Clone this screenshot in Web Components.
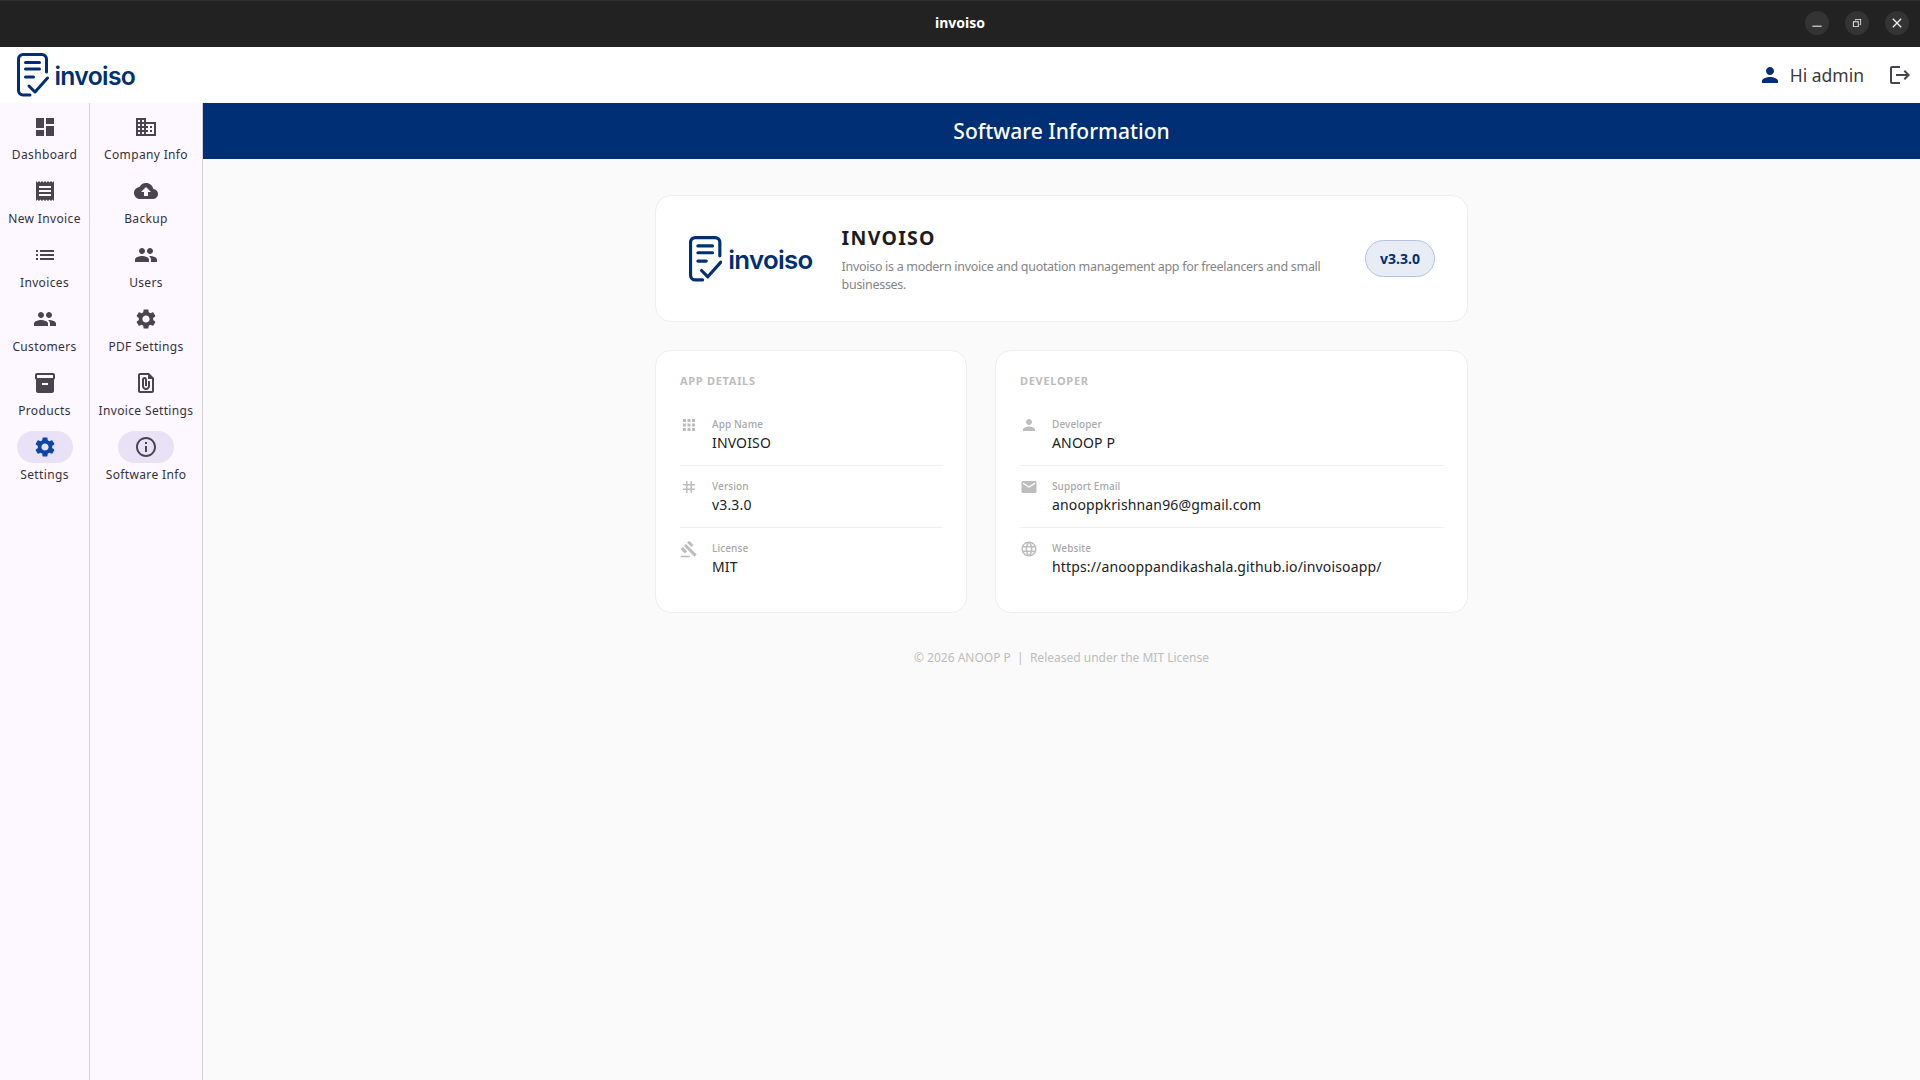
<!DOCTYPE html>
<html lang="en">
<head>
<meta charset="utf-8">
<title>invoiso</title>
<style>
  html, body { margin: 0; height: 100%; }
  body { font-family: "Noto Sans", "Open Sans", sans-serif; background: #fafafa; overflow: hidden; }
</style>
</head>
<body>
<invoiso-app></invoiso-app>

<script>
const ICONS = {
  dashboard: 'M3 13h8V3H3v10zm0 8h8v-6H3v6zm10 0h8V11h-8v10zm0-18v6h8V3h-8z',
  receipt: 'M18 17H6v-2h12v2zm0-4H6v-2h12v2zm0-4H6V7h12v2zM3 22l1.5-1.5L6 22l1.5-1.5L9 22l1.5-1.5L12 22l1.5-1.5L15 22l1.5-1.5L18 22l1.5-1.5L21 22V2l-1.5 1.5L18 2l-1.5 1.5L15 2l-1.5 1.5L12 2l-1.5 1.5L9 2 7.5 3.5 6 2 4.5 3.5 3 2v20z',
  list: 'M3 13h2v-2H3v2zm0 4h2v-2H3v2zm0-8h2V7H3v2zm4 4h14v-2H7v2zm0 4h14v-2H7v2zM7 7v2h14V7H7z',
  people: 'M16 11c1.66 0 2.99-1.34 2.99-3S17.66 5 16 5c-1.66 0-3 1.34-3 3s1.34 3 3 3zm-8 0c1.66 0 2.99-1.34 2.99-3S9.66 5 8 5C6.34 5 5 6.34 5 8s1.34 3 3 3zm0 2c-2.33 0-7 1.17-7 3.5V19h14v-2.5c0-2.33-4.67-3.5-7-3.5zm8 0c-.29 0-.62.02-.97.05 1.16.84 1.97 1.97 1.97 3.45V19h6v-2.5c0-2.33-4.67-3.5-7-3.5z',
  inventory: 'M20 2H4c-1 0-2 .9-2 2v3.01c0 .72.43 1.34 1 1.69V20c0 1.1 1.1 2 2 2h14c.9 0 2-.9 2-2V8.7c.57-.35 1-.97 1-1.69V4c0-1.1-1-2-2-2zm-5 12H9v-2h6v2zm5-7H4V4h16v3z',
  settings: 'M19.14 12.94c.04-.3.06-.61.06-.94 0-.32-.02-.64-.07-.94l2.03-1.58c.18-.14.23-.41.12-.61l-1.92-3.32c-.12-.22-.37-.29-.59-.22l-2.39.96c-.5-.38-1.03-.7-1.62-.94l-.36-2.54c-.04-.24-.24-.41-.48-.41h-3.84c-.24 0-.43.17-.47.41l-.36 2.54c-.59.24-1.13.57-1.62.94l-2.39-.96c-.22-.08-.47 0-.59.22L2.74 8.87c-.12.21-.08.47.12.61l2.03 1.58c-.05.3-.09.63-.09.94s.02.64.07.94l-2.03 1.58c-.18.14-.23.41-.12.61l1.92 3.32c.12.22.37.29.59.22l2.39-.96c.5.38 1.03.7 1.62.94l.36 2.54c.05.24.24.41.48.41h3.84c.24 0 .44-.17.47-.41l.36-2.54c.59-.24 1.13-.56 1.62-.94l2.39.96c.22.08.47 0 .59-.22l1.92-3.32c.12-.22.07-.47-.12-.61l-2.01-1.58zM12 15.6c-1.98 0-3.6-1.62-3.6-3.6s1.62-3.6 3.6-3.6 3.6 1.62 3.6 3.6-1.62 3.6-3.6 3.6z',
  domain: 'M12 7V3H2v18h20V7H12zM6 19H4v-2h2v2zm0-4H4v-2h2v2zm0-4H4V9h2v2zm0-4H4V5h2v2zm4 12H8v-2h2v2zm0-4H8v-2h2v2zm0-4H8V9h2v2zm0-4H8V5h2v2zm10 12h-8v-2h2v-2h-2v-2h2v-2h-2V9h8v10zm-2-8h-2v2h2v-2zm0 4h-2v2h2v-2z',
  cloud: 'M19.35 10.04C18.67 6.59 15.64 4 12 4 9.11 4 6.6 5.64 5.35 8.04 2.34 8.36 0 10.91 0 14c0 3.31 2.69 6 6 6h13c2.76 0 5-2.24 5-5 0-2.64-2.05-4.78-4.65-4.96zM14 13v4h-4v-4H7l5-5 5 5h-3z',
  file: 'M15 2H6c-1.1 0-2 .9-2 2v16c0 1.1.9 2 2 2h12c1.1 0 2-.9 2-2V7l-5-5zM6 20V4h8v4h4v12H6zm10-10v5c0 2.21-1.79 4-4 4s-4-1.79-4-4V8.5c0-1.47 1.26-2.64 2.76-2.49 1.3.13 2.24 1.32 2.24 2.63V15h-2V8.5c0-.28-.22-.5-.5-.5s-.5.22-.5.5V15c0 1.1.9 2 2 2s2-.9 2-2v-5h2z',
  info: 'M11 7h2v2h-2zm0 4h2v6h-2zm1-9C6.48 2 2 6.48 2 12s4.48 10 10 10 10-4.48 10-10S17.52 2 12 2zm0 18c-4.41 0-8-3.59-8-8s3.59-8 8-8 8 3.59 8 8-3.59 8-8 8z',
  apps: 'M4 8h4V4H4v4zm6 12h4v-4h-4v4zm-6 0h4v-4H4v4zm0-6h4v-4H4v4zm6 0h4v-4h-4v4zm6-10v4h4V4h-4zm-6 4h4V4h-4v4zm6 6h4v-4h-4v4zm0 6h4v-4h-4v4z',
  tag: 'M20 10V8h-4V4h-2v4h-4V4H8v4H4v2h4v4H4v2h4v4h2v-4h4v4h2v-4h4v-2h-4v-4h4zm-6 4h-4v-4h4v4z',
  gavel: 'M1 21h12v2H1zM5.245 8.07l2.83-2.827 14.14 14.142-2.828 2.828zM12.317 1l5.657 5.656-2.83 2.83-5.654-5.66zM3.825 9.485l5.657 5.657-2.828 2.828-5.657-5.657z',
  person: 'M12 12c2.21 0 4-1.79 4-4s-1.79-4-4-4-4 1.79-4 4 1.79 4 4 4zm0 2c-2.67 0-8 1.34-8 4v2h16v-2c0-2.66-5.33-4-8-4z',
  email: 'M20 4H4c-1.1 0-1.99.9-1.99 2L2 18c0 1.1.9 2 2 2h16c1.1 0 2-.9 2-2V6c0-1.1-.9-2-2-2zm0 4l-8 5-8-5V6l8 5 8-5v2z',
  language: 'M11.99 2C6.47 2 2 6.48 2 12s4.47 10 9.99 10C17.52 22 22 17.52 22 12S17.52 2 11.99 2zm6.93 6h-2.95c-.32-1.25-.78-2.45-1.38-3.56 1.84.63 3.37 1.91 4.33 3.56zM12 4.04c.83 1.2 1.48 2.53 1.91 3.96h-3.82c.43-1.43 1.08-2.76 1.91-3.96zM4.26 14C4.1 13.36 4 12.69 4 12s.1-1.36.26-2h3.38c-.08.66-.14 1.32-.14 2 0 .68.06 1.34.14 2H4.26zm.82 2h2.95c.32 1.25.78 2.45 1.38 3.56-1.84-.63-3.37-1.9-4.33-3.56zm2.95-8H5.08c.96-1.66 2.49-2.93 4.33-3.56C8.81 5.55 8.35 6.75 8.03 8zM12 19.96c-.83-1.2-1.48-2.53-1.91-3.96h3.82c-.43 1.43-1.08 2.76-1.91 3.96zM14.34 14H9.66c-.09-.66-.16-1.32-.16-2 0-.68.07-1.35.16-2h4.68c.09.65.16 1.32.16 2 0 .68-.07 1.34-.16 2zm.25 5.56c.6-1.11 1.06-2.31 1.38-3.56h2.95c-.96 1.65-2.49 2.93-4.33 3.56zM16.36 14c.08-.66.14-1.32.14-2 0-.68-.06-1.34-.14-2h3.38c.16.64.26 1.31.26 2s-.1 1.36-.26 2h-3.38z',
  logout: 'M17 7l-1.41 1.41L18.17 11H8v2h10.17l-2.58 2.58L17 17l5-5zM4 5h8V3H4c-1.1 0-2 .9-2 2v14c0 1.1.9 2 2 2h8v-2H4V5z',
  minimize: 'M5 16h14v1.6H5z',
  restore: 'M5 9h10v10H5zM6.6 10.6v6.8h6.8v-6.8zM9 5h10v10h-2.5v-1.4h1.1V6.4h-7.2v1.1H9z',
  close: 'M6.4 5l5.6 5.6L17.6 5 19 6.4 13.4 12l5.6 5.6-1.4 1.4-5.6-5.6L6.4 19 5 17.6 10.6 12 5 6.4z'
};

class MatIcon extends HTMLElement {
  connectedCallback() {
    const root = this.shadowRoot || this.attachShadow({ mode: 'open' });
    const size = this.getAttribute('size') || 24;
    root.innerHTML = `
      <style>
        :host { display: inline-flex; width: ${size}px; height: ${size}px; flex: none; color: inherit; }
        svg { width: 100%; height: 100%; display: block; fill: currentColor; fill-rule: evenodd; }
      </style>
      <svg viewBox="0 0 24 24"><path d="${ICONS[this.getAttribute('name')]}"/></svg>`;
  }
}

class InvoisoLogo extends HTMLElement {
  connectedCallback() {
    const root = this.shadowRoot || this.attachShadow({ mode: 'open' });
    const h = Number(this.getAttribute('height')) || 44;
    const scale = h / 44;
    root.innerHTML = `
      <style>
        :host { display: inline-flex; align-items: center; gap: ${5.5 * scale}px; color: #002f75; flex: none; }
        svg { height: ${h}px; width: ${32 * scale}px; display: block; }
        span {
          font: 600 ${24.7 * scale}px Inter, "Noto Sans", sans-serif;
          letter-spacing: ${-0.65 * scale}px;
          line-height: 1;
          padding-top: ${3.5 * scale}px;
        }
      </style>
      <svg viewBox="0 0 32 44" fill="none" stroke="currentColor" stroke-width="3" stroke-linecap="round" stroke-linejoin="round">
        <path d="M13 42H6a4.5 4.5 0 0 1-4.5-4.5V6A4.5 4.5 0 0 1 6 1.5h19A4.5 4.5 0 0 1 29.5 6v13"/>
        <path d="M8.5 9.5h14M8.5 16h14M8.5 24h8"/>
        <path d="M12 33l6 6L30.5 25"/>
      </svg>
      <span>invoiso</span>`;
  }
}

class WindowBar extends HTMLElement {
  constructor() {
    super();
    this.attachShadow({ mode: 'open' }).innerHTML = `
      <style>
        :host {
          display: grid;
          grid-template-columns: 1fr auto 1fr;
          align-items: center;
          height: 47px;
          padding-bottom: 2px;
          background: #222;
          border-top: 1px solid #303030;
          box-sizing: border-box;
          color: #fff;
        }
        .title { grid-column: 2; font-size: 14px; font-weight: 700; margin-bottom: 2px; }
        .buttons { grid-column: 3; justify-self: end; display: flex; gap: 16px; padding-right: 11px; }
        .btn {
          width: 24px; height: 24px; border-radius: 50%;
          background: #343434; display: flex; align-items: center; justify-content: center; color: #eee;
        }
      </style>
      <div class="title">invoiso</div>
      <div class="buttons">
        <div class="btn"><mat-icon name="minimize" size="16"></mat-icon></div>
        <div class="btn"><mat-icon name="restore" size="14"></mat-icon></div>
        <div class="btn"><mat-icon name="close" size="16"></mat-icon></div>
      </div>`;
  }
}

class AppHeader extends HTMLElement {
  constructor() {
    super();
    this.attachShadow({ mode: 'open' }).innerHTML = `
      <style>
        :host {
          display: flex;
          align-items: center;
          height: 56px;
          background: #fff;
          padding: 0 8px 0 17px;
        }
        .user { margin-left: auto; display: flex; align-items: center; }
        .who { color: #002f75; }
        .name { margin: 0 24px 0 8px; font-size: 17.5px; color: #3a3a3a; }
        .out { color: #49454f; }
      </style>
      <invoiso-logo height="44"></invoiso-logo>
      <div class="user">
        <mat-icon class="who" name="person"></mat-icon>
        <span class="name">Hi admin</span>
        <mat-icon class="out" name="logout"></mat-icon>
      </div>`;
  }
}

class NavRail extends HTMLElement {
  constructor() {
    super();
    this.attachShadow({ mode: 'open' }).innerHTML = `
      <style>
        :host {
          display: flex;
          flex-direction: column;
          gap: 12px;
          padding-top: 8px;
          background: #fdf7ff;
          border-right: 1px solid #d6d0dc;
          box-sizing: border-box;
          width: var(--rail-width, 90px);
          flex: none;
        }
      </style>
      <slot></slot>`;
  }
}

class NavItem extends HTMLElement {
  connectedCallback() {
    const root = this.shadowRoot || this.attachShadow({ mode: 'open' });
    const active = this.hasAttribute('active');
    const tint = this.getAttribute('tint') || '#49454f';
    root.innerHTML = `
      <style>
        :host { display: flex; flex-direction: column; align-items: center; }
        .pill {
          width: 56px; height: 32px; border-radius: 16px;
          display: flex; align-items: center; justify-content: center;
          color: ${tint};
          background: ${active ? '#e9e2f6' : 'transparent'};
        }
        .label {
          margin-top: 4px; font-size: 12px; line-height: 16px; font-weight: 400;
          letter-spacing: .35px; color: #35323a; white-space: nowrap;
        }
      </style>
      <div class="pill"><mat-icon name="${this.getAttribute('icon')}"></mat-icon></div>
      <div class="label"><slot></slot></div>`;
  }
}

class PageBanner extends HTMLElement {
  constructor() {
    super();
    this.attachShadow({ mode: 'open' }).innerHTML = `
      <style>
        :host {
          display: flex; align-items: center; justify-content: center;
          height: 56px; background: #002f75; color: #fff;
          font-size: 21px; font-weight: 500;
        }
      </style>
      <slot></slot>`;
  }
}

class AboutCard extends HTMLElement {
  constructor() {
    super();
    this.attachShadow({ mode: 'open' }).innerHTML = `
      <style>
        :host {
          display: flex; align-items: center;
          height: 127px; box-sizing: border-box;
          padding: 0 32px 0 33px;
          background: #fff;
          border: 1px solid #eee;
          border-radius: 16px;
        }
        .text { margin-left: 29px; flex: 1; min-width: 0; padding-right: 34px; padding-top: 2px; }
        h1 { margin: 0; font-size: 19.5px; line-height: 24px; font-weight: 700; letter-spacing: 1.3px; color: #1c1c1c; }
        p { margin: 8px 0 0; font-size: 12.5px; line-height: 18px; letter-spacing: -.3px; color: #858585; }
        .badge {
          flex: none; width: 70px; height: 37px; box-sizing: border-box;
          display: flex; align-items: center; justify-content: center;
          background: #e8edf5; border: 1px solid #b3c3dd; border-radius: 19px;
          color: #002f75; font-size: 14px; font-weight: 700;
        }
      </style>
      <invoiso-logo height="46"></invoiso-logo>
      <div class="text">
        <h1>INVOISO</h1>
        <p>Invoiso is a modern invoice and quotation management app for freelancers and small businesses.</p>
      </div>
      <div class="badge">v3.3.0</div>`;
  }
}

class DetailCard extends HTMLElement {
  connectedCallback() {
    const root = this.shadowRoot || this.attachShadow({ mode: 'open' });
    root.innerHTML = `
      <style>
        :host {
          display: block; box-sizing: border-box; height: 263px;
          padding: 23px 23px 0 24px;
          background: #fff;
          border: 1px solid #eee;
          border-radius: 16px;
        }
        h2 {
          margin: 0 0 16px; font-size: 11px; line-height: 14px; font-weight: 700;
          letter-spacing: .7px; color: #bdbdbd;
        }
      </style>
      <h2>${this.getAttribute('heading')}</h2>
      <slot></slot>`;
  }
}

class DetailRow extends HTMLElement {
  connectedCallback() {
    const root = this.shadowRoot || this.attachShadow({ mode: 'open' });
    root.innerHTML = `
      <style>
        :host {
          display: flex; gap: 14px; height: 62px; box-sizing: border-box; padding-top: 13px;
          border-bottom: 1px solid #f0f0f0;
        }
        :host([last]) { border-bottom: none; }
        mat-icon { color: #bdbdbd; margin-top: -1px; }
        .label { font-size: 10px; line-height: 14px; font-weight: 500; letter-spacing: .1px; color: #a8a8a8; }
        .value { margin-top: 2px; font-size: 14px; line-height: 20px; font-weight: 400; letter-spacing: .15px; color: #222; white-space: nowrap; }
      </style>
      <mat-icon name="${this.getAttribute('icon')}" size="18"></mat-icon>
      <div>
        <div class="label">${this.getAttribute('label')}</div>
        <div class="value"><slot></slot></div>
      </div>`;
  }
}

class InvoisoApp extends HTMLElement {
  constructor() {
    super();
    this.attachShadow({ mode: 'open' }).innerHTML = `
      <style>
        :host { display: flex; flex-direction: column; height: 100vh; }
        .body { flex: 1; display: flex; min-height: 0; }
        .second { --rail-width: 113px; }
        main { flex: 1; min-width: 0; background: #fafafa; }
        .content {
          width: 813px; margin: 36px 0 0 452px;
          display: flex; flex-direction: column;
        }
        .cols { display: grid; grid-template-columns: 312px 473px; gap: 28px; margin-top: 28px; }
        footer { margin-top: 36px; text-align: center; font-size: 12px; line-height: 18px; color: #bdbdbd; }
      </style>
      <window-bar></window-bar>
      <app-header></app-header>
      <div class="body">
        <nav-rail>
          <nav-item icon="dashboard">Dashboard</nav-item>
          <nav-item icon="receipt">New Invoice</nav-item>
          <nav-item icon="list">Invoices</nav-item>
          <nav-item icon="people">Customers</nav-item>
          <nav-item icon="inventory">Products</nav-item>
          <nav-item icon="settings" tint="#0b47a5" active>Settings</nav-item>
        </nav-rail>
        <nav-rail class="second">
          <nav-item icon="domain">Company Info</nav-item>
          <nav-item icon="cloud">Backup</nav-item>
          <nav-item icon="people">Users</nav-item>
          <nav-item icon="settings">PDF Settings</nav-item>
          <nav-item icon="file">Invoice Settings</nav-item>
          <nav-item icon="info" active>Software Info</nav-item>
        </nav-rail>
        <main>
          <page-banner>Software Information</page-banner>
          <div class="content">
            <about-card></about-card>
            <div class="cols">
              <detail-card heading="APP DETAILS">
                <detail-row icon="apps" label="App Name">INVOISO</detail-row>
                <detail-row icon="tag" label="Version">v3.3.0</detail-row>
                <detail-row icon="gavel" label="License" last>MIT</detail-row>
              </detail-card>
              <detail-card heading="DEVELOPER">
                <detail-row icon="person" label="Developer">ANOOP P</detail-row>
                <detail-row icon="email" label="Support Email">anooppkrishnan96@gmail.com</detail-row>
                <detail-row icon="language" label="Website" last>https://anooppandikashala.github.io/invoisoapp/</detail-row>
              </detail-card>
            </div>
            <footer>© 2026 ANOOP P &nbsp;|&nbsp; Released under the MIT License</footer>
          </div>
        </main>
      </div>`;
  }
}

customElements.define('mat-icon', MatIcon);
customElements.define('invoiso-logo', InvoisoLogo);
customElements.define('window-bar', WindowBar);
customElements.define('app-header', AppHeader);
customElements.define('nav-rail', NavRail);
customElements.define('nav-item', NavItem);
customElements.define('page-banner', PageBanner);
customElements.define('about-card', AboutCard);
customElements.define('detail-card', DetailCard);
customElements.define('detail-row', DetailRow);
customElements.define('invoiso-app', InvoisoApp);
</script>
</body>
</html>
